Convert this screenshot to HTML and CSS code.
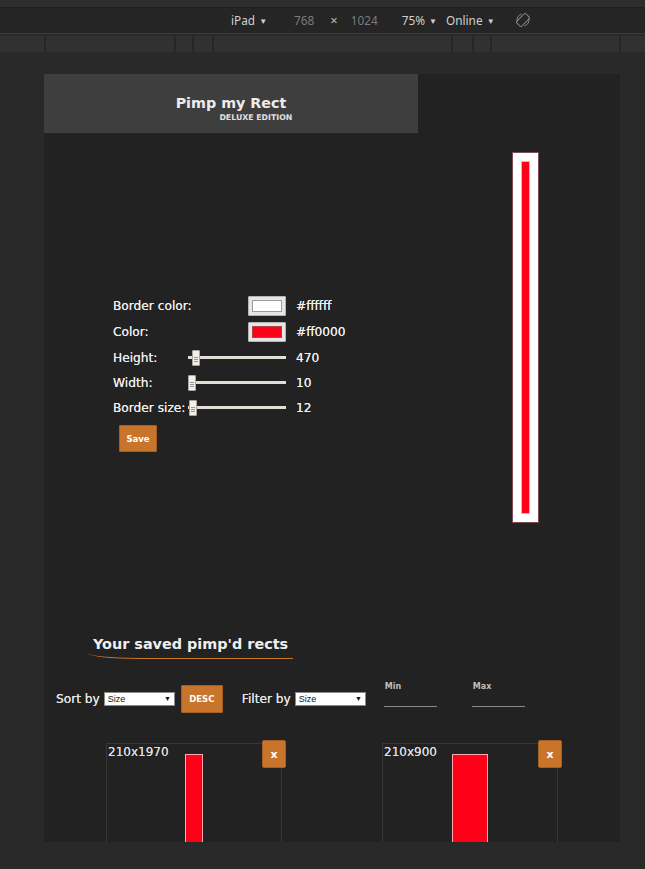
FILE: index.html
```html
<!DOCTYPE html>
<html lang="en">
<head>
<meta charset="utf-8">
<title>Pimp my Rect</title>
<link rel="stylesheet" href="styles.css">
</head>
<body>
<div class="topstrip"></div>
<div class="toolbar">
  <span class="tb-item tb-device">iPad <span class="caret">▼</span></span>
  <span class="tb-num tb-w">768</span>
  <span class="tb-x">×</span>
  <span class="tb-num tb-h">1024</span>
  <span class="tb-item tb-zoom">75% <span class="caret">▼</span></span>
  <span class="tb-item tb-net">Online <span class="caret">▼</span></span>
  <svg class="tb-rotate" width="16" height="16" viewBox="0 0 16 16" aria-hidden="true">
    <rect x="4.5" y="1.5" width="7" height="13" rx="1.5" transform="rotate(45 8 8)" fill="none" stroke="#8a8a8a" stroke-width="1"/>
    <path d="M2.2 9.5 A6 6 0 0 1 6.5 2.2" fill="none" stroke="#8a8a8a" stroke-width="1"/>
    <path d="M13.8 6.5 A6 6 0 0 1 9.5 13.8" fill="none" stroke="#8a8a8a" stroke-width="1"/>
  </svg>
</div>
<div class="rulers">
  <div class="seg"></div><div class="seg"></div><div class="seg"></div><div class="seg"></div><div class="seg"></div><div class="seg"></div><div class="seg"></div><div class="seg"></div><div class="seg"></div>
</div>
<div class="stage">
  <div class="device">
    <header class="header">
      <div class="title-block">
        <div class="title">Pimp my Rect</div>
        <div class="subtitle">DELUXE EDITION</div>
      </div>
    </header>
    <main class="main">
      <section class="form-col">
        <div class="form-grid">
          <label class="lbl">Border color:</label>
          <div class="swatch"><span class="swatch-in white"></span></div>
          <span class="val">#ffffff</span>

          <label class="lbl">Color:</label>
          <div class="swatch"><span class="swatch-in red"></span></div>
          <span class="val">#ff0000</span>

          <label class="lbl">Height:</label>
          <div class="slider"><span class="thumb" style="margin-left:4px"></span></div>
          <span class="val">470</span>

          <label class="lbl">Width:</label>
          <div class="slider"><span class="thumb" style="margin-left:0px"></span></div>
          <span class="val">10</span>

          <label class="lbl">Border size:</label>
          <div class="slider"><span class="thumb" style="margin-left:1px"></span></div>
          <span class="val">12</span>
        </div>
        <button class="btn save">Save</button>
      </section>
      <div class="preview">
        <div class="preview-in"></div>
      </div>
    </main>
    <section class="saved">
      <h2 class="saved-title">Your saved pimp'd rects</h2>
      <div class="sortbar">
        <span class="bar-lbl">Sort by</span>
        <span class="select sel-sort"><span>Size</span><span class="sel-arrow">▼</span></span>
        <button class="btn desc">DESC</button>
        <span class="bar-lbl filter-lbl">Filter by</span>
        <span class="select"><span>Size</span><span class="sel-arrow">▼</span></span>
        <div class="range-field min">
          <span class="range-lbl">Min</span>
          <span class="range-input"></span>
        </div>
        <div class="range-field max">
          <span class="range-lbl">Max</span>
          <span class="range-input"></span>
        </div>
      </div>
      <div class="cards">
        <div class="card">
          <span class="card-lbl">210x1970</span>
          <div class="card-rect" style="width:18px"></div>
          <button class="btn xbtn">x</button>
        </div>
        <div class="card">
          <span class="card-lbl">210x900</span>
          <div class="card-rect" style="width:36px"></div>
          <button class="btn xbtn">x</button>
        </div>
      </div>
    </section>
  </div>
</div>
</body>
</html>
```
FILE: styles.css
```css
* { box-sizing: border-box; }
html, body { margin: 0; padding: 0; }
body {
  width: 645px;
  height: 869px;
  overflow: hidden;
  background: #292929;
  font-family: "DejaVu Sans", Verdana, sans-serif;
}

/* top chrome */
.topstrip {
  height: 8px;
  background: #2d2d2d;
  border-bottom: 1px solid #1f1f1f;
}
.toolbar {
  height: 26px;
  background: #252525;
  display: flex;
  align-items: center;
  padding-left: 231px;
  padding-bottom: 1px;
  font-family: "Noto Sans", "Open Sans", sans-serif;
  font-size: 11.8px;
  color: #d0d0d0;
  border-bottom: 1px solid #3b3b3b;
}
.caret { font-size: 8px; position: relative; top: -1px; margin-left: 1px; }
.tb-num { color: #7a7a7a; }
.tb-w { margin-left: 27px; }
.tb-x { margin-left: 16px; color: #b8b8b8; font-size: 13px; }
.tb-h { margin-left: 13px; }
.tb-zoom { margin-left: 24px; }
.tb-net { margin-left: 9px; }
.tb-rotate { margin-left: 20px; }

.rulers {
  margin-top: 2px;
  height: 16px;
  background: #313131;
  display: grid;
  grid-template-columns: 44px 130px 18px 20px 239px 21px 18px 129px 1fr;
}
.seg { border-left: 2px solid #262626; }
.seg:first-child { border-left: 0; }

/* device */
.stage { padding: 22px 25px 0 44px; }
.device {
  width: 576px;
  height: 768px;
  background: #222222;
  overflow: hidden;
  color: #e6e6e6;
}
.header {
  width: 374px;
  height: 59px;
  background: #3e3e3e;
  display: flex;
  justify-content: center;
  padding-top: 21px;
}
.title-block { display: flex; flex-direction: column; align-items: flex-end; }
.title {
  font-weight: bold;
  font-size: 14.3px;
  line-height: 17px;
  color: #ececec;
}
.subtitle {
  font-weight: bold;
  font-size: 7.8px;
  line-height: 10px;
  margin-right: -6px;
  margin-top: 1px;
  color: #e0e0e0;
}

.main { display: flex; }
.form-col { width: 468px; padding: 160px 0 0 69px; }
.form-grid {
  display: grid;
  grid-template-columns: 75px 98px auto;
  grid-template-rows: 26px 26px 25px 25px 25px;
  align-items: center;
}
.lbl { font-size: 12.2px; color: #ececec; white-space: nowrap; text-shadow: 0 0 0.4px #ececec; }
.val { font-size: 12.2px; color: #f0f0f0; padding-left: 10px; text-shadow: 0 0 0.4px #f0f0f0; }
.swatch {
  justify-self: end;
  width: 38px;
  height: 20px;
  background: #e6e6e6;
  border: 1px solid #b4b4b4;
  border-radius: 1px;
  padding: 3px;
  display: flex;
}
.swatch-in { flex: 1; border: 1px solid #9c9c9c; }
.swatch-in.white { background: #ffffff; }
.swatch-in.red { background: #ff0019; border-color: #a44; }

.slider {
  height: 16px;
  display: flex;
  align-items: center;
  background: linear-gradient(#e2ded6, #e2ded6) center / 100% 3px no-repeat;
}
.thumb {
  width: 8px;
  height: 16px;
  background:
    linear-gradient(#9a968f, #9a968f) center 6px / 4px 1px no-repeat,
    linear-gradient(#9a968f, #9a968f) center 8px / 4px 1px no-repeat,
    linear-gradient(#9a968f, #9a968f) center 10px / 4px 1px no-repeat,
    #f1efea;
  border: 1px solid #aaa59c;
  border-radius: 1px;
}

.btn {
  font-family: "DejaVu Sans", Verdana, sans-serif;
  font-weight: bold;
  color: #ffffff;
  background: #c8742a;
  border: 1px solid #a65f22;
  border-radius: 1px;
  padding: 0;
  cursor: pointer;
}
.save {
  display: block;
  margin: 5px 0 0 6px;
  width: 38px;
  height: 27px;
  font-size: 8.5px;
}

.preview {
  margin-top: 19px;
  align-self: flex-start;
  border: 1px solid #7c4c55;
  background: #ffffff;
  padding: 8px;
}
.preview-in {
  width: 9px;
  height: 353px;
  background: #ff0019;
  border: 1px solid #ffa8b2;
}

/* saved list */
.saved { margin-top: 111px; }
.saved-title {
  display: inline-block;
  margin: 0 0 0 44px;
  padding: 0 5px 5px 5px;
  font-size: 14.4px;
  line-height: 17px;
  font-weight: bold;
  color: #efefef;
  border-bottom: 1.5px solid #c8742a;
  border-bottom-left-radius: 50px 6px;
}
.sortbar {
  margin-top: 26px;
  padding-left: 12px;
  height: 28px;
  display: flex;
  align-items: center;
}
.bar-lbl { font-size: 12.2px; color: #e6e6e6; white-space: nowrap; text-shadow: 0 0 0.4px #e6e6e6; }
.filter-lbl { margin-left: 19px; }
.select {
  margin-left: 4px;
  width: 71px;
  height: 14px;
  background: #ffffff;
  border: 1px solid #8a8a8a;
  color: #111;
  font-family: "Liberation Sans", Arial, sans-serif;
  font-size: 9px;
  line-height: 12px;
  padding: 0 3px 0 3px;
  display: flex;
  justify-content: space-between;
  align-items: center;
}
.sel-arrow { font-size: 7px; }
.desc {
  margin-left: 6px;
  width: 42px;
  height: 28px;
  font-size: 8.5px;
}
.range-field {
  align-self: flex-start;
  margin-top: -3px;
  display: flex;
  flex-direction: column;
  width: 53px;
}
.range-field.min { margin-left: 18px; }
.range-field.max { margin-left: 35px; }
.range-lbl {
  font-size: 8px;
  font-weight: bold;
  color: #bdbdbd;
  line-height: 10px;
  padding-left: 1px;
}
.range-input {
  height: 15px;
  border-bottom: 1px solid #8a8a8a;
}

.cards {
  margin-top: 30px;
  padding-left: 62px;
  display: flex;
  gap: 100px;
}
.card {
  position: relative;
  width: 176px;
  height: 220px;
  border: 1px solid #363636;
  display: flex;
  justify-content: center;
  align-items: flex-start;
}
.card-lbl {
  position: absolute;
  left: 1px;
  top: 1px;
  font-size: 12px;
  line-height: 14px;
  color: #dedede;
  text-shadow: 0 0 0.4px #dedede;
}
.card-rect {
  margin-top: 10px;
  height: 200px;
  background: #ff0019;
  border: 1px solid #ffa8b2;
}
.xbtn {
  position: absolute;
  top: -4px;
  right: -5px;
  width: 24px;
  height: 28px;
  font-size: 11px;
  border-radius: 2px;
}
```
